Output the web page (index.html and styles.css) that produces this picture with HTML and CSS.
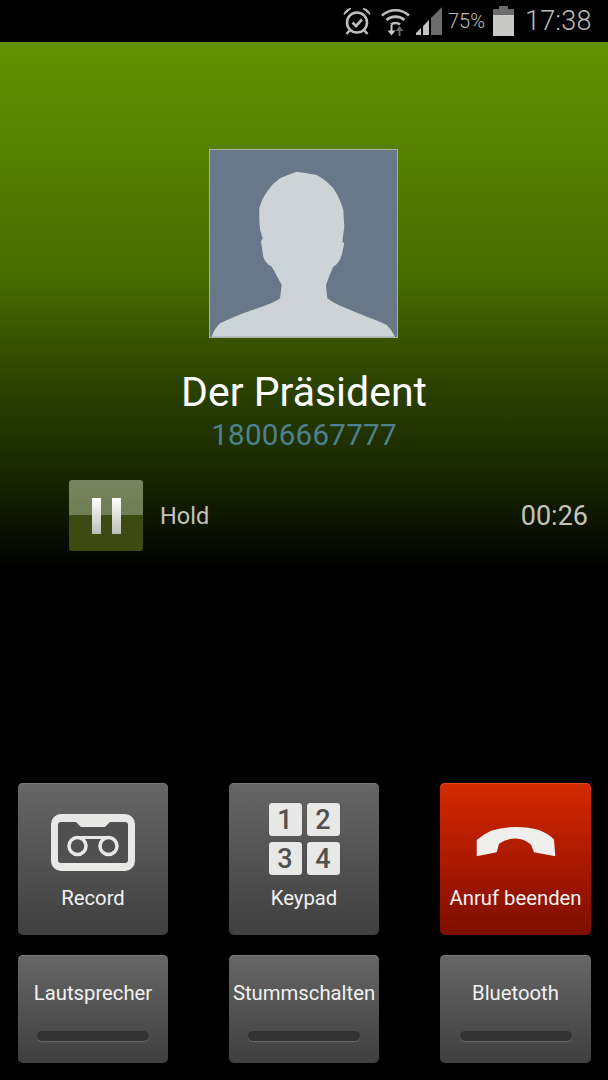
FILE: index.html

```html
<!DOCTYPE html>
<html lang="de">
<head>
    <meta charset="UTF-8">
    <title>Anruf</title>
    <link rel="stylesheet" href="styles.css">
</head>
<body>
    <div class="statusbar">
        <svg class="ic-alarm" width="28" height="28" viewBox="0 0 28 28" fill="none" stroke="#bdbdbb">
            <circle cx="14" cy="15.5" r="10" stroke-width="2.6"/>
            <path d="M9.5 15.5l3.5 3.5 6-6.5" stroke-width="2.6"/>
            <path d="M1 7.5C2 3.5 5 1.500 8 1.500zM27 7.500C26 3.500 23 1.500 20 1.500z" fill="#bdbdbb" stroke-width="1"/>
            <path d="M6.500 23.500l-3 3.500M21.500 23.500l3 3.500" stroke-width="2.600"/>
        </svg>
        <svg class="ic-wifi" width="29" height="30" viewBox="0 0 29 30" fill="none" stroke="#bdbdbb">
            <path d="M1 9.500C8.500 2.500 20.500 2.500 28 9.500" stroke-width="2.600"/>
            <path d="M5.500 14C10.500 9.500 18.500 9.500 23.500 14" stroke-width="2.600"/>
            <path d="M10 18.500C12.500 16.500 16.500 16.500 19 18.500" stroke-width="2.600"/>
            <path d="M10.500 19v8" stroke="#c8c8c6" stroke-width="2"/>
            <path d="M6.500 24.500h8l-4 5z" fill="#c8c8c6" stroke="none"/>
            <path d="M18.500 22v8" stroke="#6a6a6a" stroke-width="2"/>
            <path d="M14.500 25h8l-4-5z" fill="#6a6a6a" stroke="none"/>
        </svg>
        <svg class="ic-signal" width="26" height="28" viewBox="0 0 26 28">
            <path d="M15 11L26 0v28H15z" fill="#6c6c6c"/>
            <path d="M0 26l5-5v7H0zM7 19l6-6v15H7z" fill="#c4c4c2"/>
        </svg>
        <span class="battery-pct">75%</span>
        <div class="battery">
            <div class="battery-cap"></div>
            <div class="battery-body"><div class="battery-fill"></div></div>
        </div>
        <span class="clock">17:38</span>
    </div>

    <div class="call">
        <div class="photo">
            <svg width="187" height="187" viewBox="1 1 187 187">
                <path fill="#cdd4d8" d="M2.700 187.700Q5 180 11 174.300Q22 169 34.300 164.300L57.700 156Q68 152 71 149.300L72.700 136Q67 125 62.700 117.700Q56 114 54.300 107.700L52 92.700L53.700 89.300Q50 80 50.300 71L50.300 59.300Q53 49 59.300 41Q64 34 71 29.300Q78 26 87.700 22.700Q98 24 107.700 26Q117 31 124.300 39.300Q131 49 134.300 61L135.300 77.700L133.300 92.700L135.300 94.300L132.700 106Q130 115 124.300 117.700Q120 127 117 136L118.300 149.300Q123 153 131 156.700L157.700 167.700Q170 172 177.700 176Q183 181 186 187.700Z"/>
            </svg>
        </div>
        <div class="name">Der Präsident</div>
        <div class="number">18006667777</div>
        <div class="hold-row">
            <div class="pause-btn">
                <span class="pause-bar"></span>
                <span class="pause-bar"></span>
            </div>
            <span class="hold-label">Hold</span>
            <span class="timer">00:26</span>
        </div>
    </div>

    <div class="buttons">
        <div class="btn btn-big">
            <div class="btn-icon">
                <svg class="ic-record" width="84" height="57" viewBox="0 0 84 57">
                    <rect width="84" height="57" rx="10" fill="#e8e8e6"/>
                    <path d="M7 11Q7 8 10 8H25L30 13H54L59 8H74Q77 8 77 11V46Q77 49 74 49H10Q7 49 7 46Z" fill="#505050"/>
                    <circle cx="26.500" cy="32" r="8.500" fill="none" stroke="#e8e8e6" stroke-width="3.500"/>
                    <circle cx="57.500" cy="32" r="8.500" fill="none" stroke="#e8e8e6" stroke-width="3.500"/>
                    <path d="M26.500 23.500H57.500" stroke="#e8e8e6" stroke-width="3"/>
                </svg>
            </div>
            <div class="btn-label">Record</div>
        </div>
        <div class="btn btn-big">
            <div class="btn-icon">
                <div class="keys">
                    <span class="key">1</span>
                    <span class="key">2</span>
                    <span class="key">3</span>
                    <span class="key">4</span>
                </div>
            </div>
            <div class="btn-label">Keypad</div>
        </div>
        <div class="btn btn-big btn-end">
            <div class="btn-icon">
                <svg class="ic-hangup" width="80" height="31" viewBox="0 0 80 33" preserveAspectRatio="none">
                    <path fill="#efefed" d="M0.700 15Q7 9 15 5Q27 1 40 1Q53 1 63 4.300Q72 8 78 14.300L79.300 32.300L58 28L55 20Q48 13.300 40 13.300Q31 13.300 23 19L20.700 28L0.700 32.300Z"/>
                </svg>
            </div>
            <div class="btn-label">Anruf beenden</div>
        </div>
        <div class="btn btn-small">
            <div class="btn-label">Lautsprecher</div>
            <div class="toggle"></div>
        </div>
        <div class="btn btn-small">
            <div class="btn-label">Stummschalten</div>
            <div class="toggle"></div>
        </div>
        <div class="btn btn-small">
            <div class="btn-label">Bluetooth</div>
            <div class="toggle"></div>
        </div>
    </div>
</body>
</html>
```

FILE: styles.css

```css
html, body { margin: 0; padding: 0; background: #000; }
body { width: 608px; height: 1080px; overflow: hidden; font-family: Roboto, "Liberation Sans", sans-serif; display: flex; flex-direction: column; }

.statusbar { height: 42px; background: #000; display: flex; align-items: center; justify-content: flex-end; padding-right: 17px; color: #bdbdbb; flex-shrink: 0; }
.statusbar svg { display: block; flex-shrink: 0; }
.ic-alarm { margin-right: 10px; }
.ic-wifi { margin-right: 6px; }
.ic-signal { margin-right: 6px; }
.battery-pct { font-size: 20px; font-weight: 300; width: 38px; margin-right: 7px; white-space: nowrap; }
.battery { width: 21px; height: 30px; display: flex; flex-direction: column; align-items: center; margin-right: 11px; }
.battery-cap { width: 9px; height: 3px; background: #6c6c6c; }
.battery-body { flex: 1; width: 21px; background: #6c6c6c; display: flex; flex-direction: column; justify-content: flex-end; }
.battery-fill { height: 21px; background: #c8c8c6; }
.clock { font-size: 27px; font-weight: 300; letter-spacing: 0.2px; width: 66px; white-space: nowrap; text-align: right; }

.call { height: 530px; flex-shrink: 0; background: linear-gradient(#629200 0, #588400 90px, #476a00 240px, #2b4300 340px, #172400 440px, #000 530px); display: flex; flex-direction: column; align-items: center; padding-top: 107px; box-sizing: border-box; }
.photo { width: 187px; height: 187px; background: #687888; border: 1px solid #a9b3a0; display: flex; overflow: hidden; margin-right: 1px; }
.photo svg { display: block; }
.name { font-size: 41px; line-height: 44px; color: #fff; margin-top: 32px; }
.number { font-size: 29.500px; line-height: 36px; color: #4f8090; margin-top: 3px; letter-spacing: 0.3px; }

.hold-row { align-self: stretch; display: flex; align-items: center; margin-top: 27px; padding: 0 20px 0 69px; }
.pause-btn { width: 74px; height: 71px; border-radius: 3px; background: linear-gradient(#78845f 0, #6f7d52 50%, #3c4a12 50%, #3e4c12 100%); display: flex; justify-content: center; align-items: center; gap: 11px; }
.pause-bar { width: 9px; height: 36px; background: linear-gradient(#fff, #bdbdb8); }
.hold-label { font-size: 23.500px; color: #c4c4bc; margin-left: 17px; flex: 1; }
.timer { font-size: 27px; color: #c4c4bc; }

.buttons { flex: 1; background: #000; display: grid; grid-template-columns: 150px 150px 151px; grid-template-rows: 152px 108px; justify-content: space-between; align-content: end; row-gap: 20px; padding: 0 17px 17px 18px; box-sizing: border-box; }
.btn { border-radius: 5px; background: linear-gradient(#666 0, #3f3f3f 100%); color: #f2f2f2; display: flex; flex-direction: column; align-items: center; box-shadow: inset 0 1px 0 #777; }
.btn-big { padding-top: 20px; box-sizing: border-box; }
.btn-small { padding-top: 26px; box-sizing: border-box; }
.btn-end { background: linear-gradient(#d42a00 0, #a81800 55%, #7c0e00 100%); box-shadow: inset 0 1px 0 #e04a20; }
.btn-icon { height: 72px; display: flex; align-items: flex-end; justify-content: center; }
.btn-icon svg { display: block; }
.ic-record { margin-bottom: 4px; }
.ic-hangup { margin-bottom: 18px; }
.btn-big .btn-label { margin-top: 11px; }
.btn-label { font-size: 20.300px; line-height: 24px; white-space: nowrap; }

.keys { display: grid; grid-template-columns: 33px 33px; grid-template-rows: 33px 33px; gap: 6px 5px; }
.key { background: #e8e8e6; border-radius: 3px; color: #505050; font-size: 27px; font-weight: 500; display: flex; align-items: center; justify-content: center; box-shadow: 0 0 1px #2a2a2a; }

.toggle { width: 112px; height: 10px; border-radius: 5px; background: #333; box-shadow: 0 1px 0 #666; margin-top: 26px; }
```
